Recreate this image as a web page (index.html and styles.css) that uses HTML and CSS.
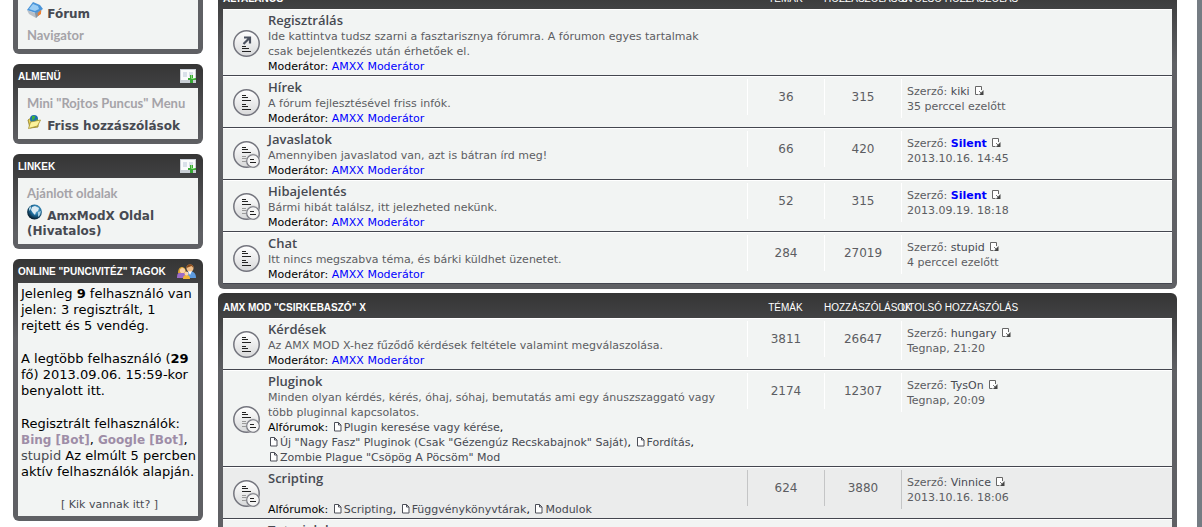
FILE: index.html
```html
<!DOCTYPE html>
<html lang="hu">
<head>
    <meta charset="UTF-8">
    <meta name="viewport" content="width=device-width, initial-scale=1.0">
    <title>Fórum</title>
    <link rel="stylesheet" href="styles.css">
</head>
<body>

    <!-- icons -->
    <svg class="sprite" aria-hidden="true">
        <defs>
            <linearGradient id="disc" x1="0" y1="0" x2="0" y2="1">
                <stop offset="0" stop-color="#ffffff"/>
                <stop offset="1" stop-color="#d8d9da"/>
            </linearGradient>
            <radialGradient id="globe" cx="0.6" cy="0.35" r="0.7">
                <stop offset="0" stop-color="#7cc4e8"/>
                <stop offset="0.5" stop-color="#1f6f9f"/>
                <stop offset="1" stop-color="#04131f"/>
            </radialGradient>
        </defs>
        <symbol id="i-read" viewBox="0 0 27 27">
            <circle cx="13.5" cy="13.5" r="12.7" fill="url(#disc)" stroke="#74757e" stroke-width="1.5"/>
            <path d="M9 6.5h4M9 8.5h6M9 11.5h9M9 15.5h4M9 17.5h6M9 20.5h9" stroke="#222" stroke-width="1"/>
        </symbol>
        <symbol id="i-link" viewBox="0 0 27 27">
            <circle cx="13.5" cy="13.5" r="12.7" fill="url(#disc)" stroke="#74757e" stroke-width="1.5"/>
            <path d="M9 16.5h4M9 18.5h7M9 21.5h9" stroke="#222" stroke-width="1"/>
            <path d="M11 7.5h6v6M17 7.500l-6.500 6.500" fill="none" stroke="#4c5260" stroke-width="2.200"/>
        </symbol>
        <symbol id="i-sub" viewBox="0 0 27 27">
            <circle cx="13.5" cy="13.5" r="12.7" fill="url(#disc)" stroke="#74757e" stroke-width="1.5"/>
            <path d="M9 6.5h4M9 8.5h6M9 11.5h9" stroke="#222" stroke-width="1"/>
            <path d="M9 15.5h4M9 17.5h5M9 20.5h5" stroke="#999" stroke-width="1"/>
            <circle cx="20" cy="20" r="7.500" fill="#bbb" opacity="0.6"/>
            <circle cx="20" cy="20" r="6.300" fill="#f4f4f4" stroke="#74757e" stroke-width="1.1"/>
            <path d="M17 18.500h4M17 21.500h6" stroke="#222" stroke-width="1"/>
        </symbol>
        <symbol id="i-latest" viewBox="0 0 9 10">
            <path d="M3.500 8.500H.5V.5h6v3.500" fill="#fff" stroke="#666" stroke-width="1"/>
            <path d="M4 5l3 3" stroke="#444" stroke-width="1" stroke-dasharray="1 .5"/>
            <path d="M8.500 4v5H4z" fill="#444"/>
        </symbol>
        <symbol id="i-page" viewBox="0 0 8 10">
            <path d="M.5.5h4l2.500 2.500v6H.5z" fill="#fff" stroke="#4c4f58" stroke-width="1"/>
            <path d="M4.500.5v2.500H7" fill="none" stroke="#4c4f58" stroke-width="1"/>
        </symbol>
        <symbol id="i-box" viewBox="0 0 16 16">
            <path d="M0 8l8 3 7-4-1 4-5 5-7-4z" fill="#b9c0c8"/>
            <path d="M8 11l6-3-1 4-4 4z" fill="#8c939c"/>
            <path d="M6 0l7 3 3 4-7 4-9-3z" fill="#4a94d8"/>
            <path d="M6 2l5 2 1 3-4 2-6-2z" fill="#9acdf5"/>
            <path d="M11 11l3-3v4l-3 2z" fill="#ee8133"/>
        </symbol>
        <symbol id="i-folder" viewBox="0 0 16 16">
            <path d="M1 6l3-2 3 1 4 1v7l-8 1z" fill="#e8d45c" stroke="#8d7a22" stroke-width="0.8"/>
            <circle cx="7" cy="5" r="4" fill="#1d6fae"/>
            <path d="M5 2l3 0 0 2-3 3zM8 6l3-1v2z" fill="#3fae3b"/>
            <path d="M3.500 8l10-2-3 6-9 2.500z" fill="#fbf29b" stroke="#a4902d" stroke-width="0.8"/>
        </symbol>
        <symbol id="i-globe" viewBox="0 0 16 16">
            <circle cx="7.500" cy="8" r="7.400" fill="url(#globe)"/>
            <path d="M5 3l3-1 4 2-1 3-2 1-1 3-2-2-2-3z" fill="#dcebf3"/>
            <path d="M2 4l2-2v3l-2 2zM11 8l3-1-1 4-2 2z" fill="#a8cfe2"/>
        </symbol>
        <symbol id="i-add" viewBox="0 0 16 14">
            <path d="M0 0h16v14H0z" fill="#c9ced5"/>
            <path d="M1 1h14v10H1z" fill="#fafbfc"/>
            <path d="M3 3h4v5H3zM9 3h4v5H9z" fill="#d9e0ea"/>
            <path d="M10 6h3v3h3v2h-3v3h-3v-3H8V9h2z" fill="#39a935"/>
            <path d="M11.500 6v3.500h3" fill="none" stroke="#8be07d"/>
        </symbol>
        <symbol id="i-users" viewBox="0 0 19 15">
            <path d="M9 14c0-5 1-7 4-7s6 2 6 7z" fill="#5d9be0"/>
            <path d="M11 7h4l-2 4z" fill="#fff"/>
            <circle cx="13" cy="4" r="3.500" fill="#f2c08a"/>
            <path d="M9.500 4c0-5 7-5 7 0l-2-2z" fill="#8a4b1d"/>
            <path d="M0 14c0-4 1-6 5-6s5 2 5 6z" fill="#9a6bc6"/>
            <path d="M1 9c0-8 8-8 8 0z" fill="#dca334"/>
            <circle cx="5.500" cy="6.500" r="2.600" fill="#fad3a6"/>
            <path d="M6 15c0-3 1-4 3.500-4s3.500 1 3.500 4z" fill="#f0b437"/>
            <circle cx="9.500" cy="9.500" r="2" fill="#fbd4a3"/>
        </symbol>
    </svg>

    <div class="page">

        <aside class="sidebar">
            <div class="panel first">
                <div class="panel-body menu">
                    <a href="#" class="item"><svg class="icon16"><use href="#i-box"/></svg> Fórum</a>
                    <h4>Navigator</h4>
                </div>
            </div>

            <div class="panel">
                <h3>Almenü <svg class="add"><use href="#i-add"/></svg></h3>
                <div class="panel-body menu">
                    <h4>Mini "Rojtos Puncus" Menu</h4>
                    <a href="#" class="item"><svg class="icon16"><use href="#i-folder"/></svg> Friss hozzászólások</a>
                </div>
            </div>

            <div class="panel">
                <h3>Linkek <svg class="add"><use href="#i-add"/></svg></h3>
                <div class="panel-body menu">
                    <h4>Ajánlott oldalak</h4>
                    <a href="#" class="item"><svg class="icon16"><use href="#i-globe"/></svg> AmxModX Oldal (Hivatalos)</a>
                </div>
            </div>

            <div class="panel">
                <h3>Online "puncivitéz" tagok <svg class="users"><use href="#i-users"/></svg></h3>
                <div class="panel-body online">
                    <p>Jelenleg <b>9</b> felhasználó van jelen: 3 regisztrált, 1 rejtett és 5 vendég.</p>
                    <p>A legtöbb felhasználó (<b>29</b> fő) 2013.09.06. 15:59-kor benyalott itt.</p>
                    <p>Regisztrált felhasználók: <a href="#" class="bot">Bing [Bot]</a>, <a href="#" class="bot">Google [Bot]</a>, <a href="#">stupid</a> Az elmúlt 5 percben aktív felhasználók alapján.</p>
                    <p class="who">[ <a href="#">Kik vannak itt?</a> ]</p>
                </div>
            </div>
        </aside>

        <main class="content">
            <div class="panel">
                <table class="forums">
                    <colgroup>
                        <col class="c-status">
                        <col>
                        <col class="c-count">
                        <col class="c-count">
                        <col class="c-last">
                    </colgroup>
                    <thead>
                        <tr>
                            <th class="name" colspan="2">Általános</th>
                            <th>Témák</th>
                            <th>Hozzászólások</th>
                            <th class="last">Utolsó hozzászólás</th>
                        </tr>
                    </thead>
                    <tbody>
                        <tr>
                            <td class="status"><svg class="disc"><use href="#i-link"/></svg></td>
                            <td class="topic">
                                <a href="#" class="title">Regisztrálás</a>
                                <div class="desc">Ide kattintva tudsz szarni a fasztarisznya fórumra. A fórumon egyes tartalmak csak bejelentkezés után érhetőek el.</div>
                                <div class="mods">Moderátor: <a href="#">AMXX Moderátor</a></div>
                            </td>
                            <td></td>
                            <td></td>
                            <td></td>
                        </tr>
                        <tr>
                            <td class="status"><svg class="disc"><use href="#i-read"/></svg></td>
                            <td class="topic">
                                <a href="#" class="title">Hírek</a>
                                <div class="desc">A fórum fejlesztésével friss infók.</div>
                                <div class="mods">Moderátor: <a href="#">AMXX Moderátor</a></div>
                            </td>
                            <td><div class="num">36</div></td>
                            <td><div class="num">315</div></td>
                            <td><div class="post">Szerző: <a href="#">kiki</a> <svg class="latest"><use href="#i-latest"/></svg><br>35 perccel ezelőtt</div></td>
                        </tr>
                        <tr>
                            <td class="status"><svg class="disc"><use href="#i-sub"/></svg></td>
                            <td class="topic">
                                <a href="#" class="title">Javaslatok</a>
                                <div class="desc">Amennyiben javaslatod van, azt is bátran írd meg!</div>
                                <div class="mods">Moderátor: <a href="#">AMXX Moderátor</a></div>
                            </td>
                            <td><div class="num">66</div></td>
                            <td><div class="num">420</div></td>
                            <td><div class="post">Szerző: <a href="#" class="admin">Silent</a> <svg class="latest"><use href="#i-latest"/></svg><br>2013.10.16. 14:45</div></td>
                        </tr>
                        <tr>
                            <td class="status"><svg class="disc"><use href="#i-sub"/></svg></td>
                            <td class="topic">
                                <a href="#" class="title">Hibajelentés</a>
                                <div class="desc">Bármi hibát találsz, itt jelezheted nekünk.</div>
                                <div class="mods">Moderátor: <a href="#">AMXX Moderátor</a></div>
                            </td>
                            <td><div class="num">52</div></td>
                            <td><div class="num">315</div></td>
                            <td><div class="post">Szerző: <a href="#" class="admin">Silent</a> <svg class="latest"><use href="#i-latest"/></svg><br>2013.09.19. 18:18</div></td>
                        </tr>
                        <tr>
                            <td class="status"><svg class="disc"><use href="#i-read"/></svg></td>
                            <td class="topic">
                                <a href="#" class="title">Chat</a>
                                <div class="desc">Itt nincs megszabva téma, és bárki küldhet üzenetet.</div>
                                <div class="mods">Moderátor: <a href="#">AMXX Moderátor</a></div>
                            </td>
                            <td><div class="num">284</div></td>
                            <td><div class="num">27019</div></td>
                            <td><div class="post">Szerző: <a href="#">stupid</a> <svg class="latest"><use href="#i-latest"/></svg><br>4 perccel ezelőtt</div></td>
                        </tr>
                    </tbody>
                </table>
            </div>

            <div class="panel">
                <table class="forums">
                    <colgroup>
                        <col class="c-status">
                        <col>
                        <col class="c-count">
                        <col class="c-count">
                        <col class="c-last">
                    </colgroup>
                    <thead>
                        <tr>
                            <th class="name" colspan="2">AMX Mod "Csirkebaszó" X</th>
                            <th>Témák</th>
                            <th>Hozzászólások</th>
                            <th class="last">Utolsó hozzászólás</th>
                        </tr>
                    </thead>
                    <tbody>
                        <tr>
                            <td class="status"><svg class="disc"><use href="#i-read"/></svg></td>
                            <td class="topic">
                                <a href="#" class="title">Kérdések</a>
                                <div class="desc">Az AMX MOD X-hez fűződő kérdések feltétele valamint megválaszolása.</div>
                                <div class="mods">Moderátor: <a href="#">AMXX Moderátor</a></div>
                            </td>
                            <td><div class="num">3811</div></td>
                            <td><div class="num">26647</div></td>
                            <td><div class="post">Szerző: <a href="#">hungary</a> <svg class="latest"><use href="#i-latest"/></svg><br>Tegnap, 21:20</div></td>
                        </tr>
                        <tr>
                            <td class="status"><svg class="disc"><use href="#i-sub"/></svg></td>
                            <td class="topic">
                                <a href="#" class="title">Pluginok</a>
                                <div class="desc">Minden olyan kérdés, kérés, óhaj, sóhaj, bemutatás ami egy ánuszszaggató vagy több pluginnal kapcsolatos.</div>
                                <div class="subs">Alfórumok: <a href="#"><svg class="page-icon"><use href="#i-page"/></svg>Plugin keresése vagy kérése</a>,<br>
                                <a href="#"><svg class="page-icon"><use href="#i-page"/></svg>Új "Nagy Fasz" Pluginok (Csak "Gézengúz Recskabajnok" Saját)</a>, <a href="#"><svg class="page-icon"><use href="#i-page"/></svg>Fordítás</a>,<br>
                                <a href="#"><svg class="page-icon"><use href="#i-page"/></svg>Zombie Plague "Csöpög A Pöcsöm" Mod</a></div>
                            </td>
                            <td><div class="num">2174</div></td>
                            <td><div class="num">12307</div></td>
                            <td><div class="post">Szerző: <a href="#">TysOn</a> <svg class="latest"><use href="#i-latest"/></svg><br>Tegnap, 20:09</div></td>
                        </tr>
                        <tr class="active">
                            <td class="status"><svg class="disc"><use href="#i-sub"/></svg></td>
                            <td class="topic">
                                <a href="#" class="title">Scripting</a>
                                <div class="desc"></div>
                                <div class="subs">Alfórumok: <a href="#"><svg class="page-icon"><use href="#i-page"/></svg>Scripting</a>, <a href="#"><svg class="page-icon"><use href="#i-page"/></svg>Függvénykönyvtárak</a>, <a href="#"><svg class="page-icon"><use href="#i-page"/></svg>Modulok</a></div>
                            </td>
                            <td><div class="num">624</div></td>
                            <td><div class="num">3880</div></td>
                            <td><div class="post">Szerző: <a href="#">Vinnice</a> <svg class="latest"><use href="#i-latest"/></svg><br>2013.10.16. 18:06</div></td>
                        </tr>
                        <tr>
                            <td></td>
                            <td class="topic">
                                <a href="#" class="title">Tutorialok</a>
                            </td>
                            <td></td>
                            <td></td>
                            <td></td>
                        </tr>
                    </tbody>
                </table>
            </div>
        </main>

    </div>

</body>
</html>
```
FILE: styles.css
```css
html {
    height: 100%;
    overflow: hidden;
}
body {
    margin: 0;
    height: 100%;
    overflow: hidden;
    box-sizing: border-box;
    border-right: 5px solid #757c83;
    background: #fff;
    color: #000;
    font-family: Verdana, "DejaVu Sans", sans-serif;
    font-size: 11px;
    line-height: 15px;
}
a {
    color: #474a52;
    text-decoration: none;
}
a:hover {
    text-decoration: underline;
}
h3, h4, p {
    margin: 0;
}
.sprite {
    position: absolute;
    width: 0;
    height: 0;
}

/* layout */
.page {
    display: flex;
    align-items: flex-start;
    gap: 15px;
    padding: 0 20px 0 13px;
    margin-top: -16px; /* page is scrolled past the first header */
}
.sidebar {
    display: flex;
    flex-direction: column;
    flex: 0 0 190px;
    min-width: 0;
    gap: 10px;
}
.content {
    display: flex;
    flex-direction: column;
    flex: 1;
    min-width: 0;
    gap: 4px;
}

/* panels */
.panel {
    padding: 0 5px 5px;
    border-radius: 6px;
    background: #5f6064 linear-gradient(#353535, #5f6064) no-repeat;
    background-size: 100% 80px;
}
.panel.first {
    background: #5f6064;
}
.panel h3 {
    display: flex;
    align-items: center;
    justify-content: space-between;
    height: 24px;
    color: #fff;
    font: bold 10px Arial, "Liberation Sans", sans-serif;
    text-transform: uppercase;
    white-space: nowrap;
}
.panel-body {
    background: #f2f4f3;
}
.add {
    width: 16px;
    height: 14px;
    margin-right: 2px;
}
.users {
    width: 19px;
    height: 15px;
    margin-right: 2px;
}

/* side menus */
.menu {
    padding: 6px 9px 5px;
}
.menu h4 {
    color: #a5a3a8;
    font: bold 13px/18px "Comic Sans MS", Lato, sans-serif;
}
.menu .item {
    display: block;
    padding-top: 7px;
    font-size: 12px;
    font-weight: bold;
}
.first .menu {
    padding-top: 16px;
}
.first h4 {
    margin-top: 4px;
}
.icon16 {
    width: 16px;
    height: 16px;
    margin-top: -6px;
}
.online {
    padding: 3px 0 3px 3px;
    font-size: 13px;
    line-height: 16px;
}
.online p {
    margin-bottom: 17px;
}
.online .bot {
    color: #9e8da7;
    font-size: 12px;
    font-weight: bold;
}
.online .who {
    margin-bottom: 0;
    color: #474a52;
    font-size: 11px;
    text-align: center;
}

/* forum list */
.forums {
    width: 100%;
    table-layout: fixed;
    border-collapse: separate;
    border-spacing: 0;
}
.c-status {
    width: 45px;
}
.c-count {
    width: 77px;
}
.c-last {
    width: 271px;
}
.forums th {
    height: 25px;
    box-sizing: border-box;
    padding: 4px 0 0;
    color: #fff;
    font: 10px/13px Arial, "Liberation Sans", sans-serif;
    text-transform: uppercase;
    white-space: nowrap;
}
.forums .name {
    font-weight: bold;
    text-align: left;
}
.forums .last {
    text-align: left;
}
.forums td {
    padding: 2px 0 1px;
    border-top: 1px solid #fff;
    border-bottom: 1px solid #44464f;
    background: #f2f4f3;
    color: #5c5d62;
    vertical-align: top;
}
.forums .active td {
    background: #ebecec;
}
.forums .status {
    vertical-align: middle;
}
.disc {
    display: block;
    width: 27px;
    height: 27px;
    margin-left: 10px;
}
.forums .topic {
    padding-right: 26px;
}
.title {
    display: block;
    margin-bottom: 1px;
    font: 600 13px/16px "Trebuchet MS", "Open Sans", sans-serif;
}
.desc {
    min-height: 15px;
}
.mods, .subs {
    color: #000;
}
.mods a {
    color: #00f;
}
.num {
    border-left: 1px solid #fff;
    font-size: 12px;
    line-height: 36px;
    text-align: center;
}
.post {
    padding: 5px 0 4px 5px;
    border-left: 1px solid #fff;
}
.post .admin {
    color: #00f;
    font-weight: bold;
}
.active .num, .active .post {
    border-color: #c4c5c6;
}
.latest {
    width: 9px;
    height: 10px;
    margin-left: 2px;
    vertical-align: -1px;
}
.page-icon {
    width: 8px;
    height: 10px;
    margin: 0 2px;
    vertical-align: -1px;
}
```
